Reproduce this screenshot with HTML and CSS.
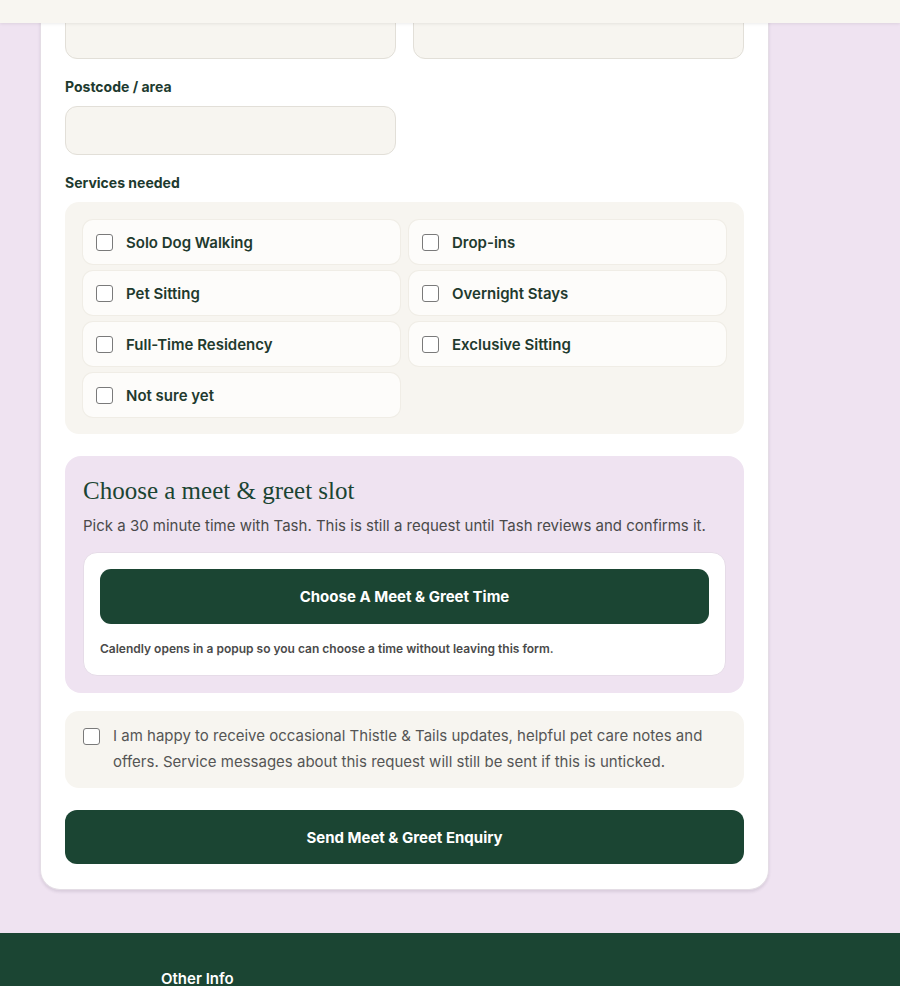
FILE: index.html
```html
<!doctype html>
<html lang="en">
	<head>
		<meta charset="utf-8" />
		<title>Meet &amp; Greet Enquiry - Thistle &amp; Tails</title>
		<link rel="stylesheet" href="styles.css">
	</head>
	<body>
		<header class="topbar"></header>

		<div class="page">
			<main class="card">
				<form class="enquiry" method="post">
					<div class="row">
						<input class="text-input" type="text" name="phone" />
						<input class="text-input" type="text" name="pet" />
					</div>

					<div class="field">
						<label class="label" for="postcode">Postcode / area</label>
						<div class="row">
							<input class="text-input" type="text" id="postcode" name="postcode" />
						</div>
					</div>

					<div class="field">
						<span class="label">Services needed</span>
						<div class="services">
							<label class="service"><input type="checkbox" name="services" value="solo" /><span>Solo Dog Walking</span></label>
							<label class="service"><input type="checkbox" name="services" value="dropins" /><span>Drop-ins</span></label>
							<label class="service"><input type="checkbox" name="services" value="sitting" /><span>Pet Sitting</span></label>
							<label class="service"><input type="checkbox" name="services" value="overnight" /><span>Overnight Stays</span></label>
							<label class="service"><input type="checkbox" name="services" value="residency" /><span>Full-Time Residency</span></label>
							<label class="service"><input type="checkbox" name="services" value="exclusive" /><span>Exclusive Sitting</span></label>
							<label class="service"><input type="checkbox" name="services" value="unsure" /><span>Not sure yet</span></label>
						</div>
					</div>

					<section class="slot">
						<h2>Choose a meet &amp; greet slot</h2>
						<p class="slot-intro">Pick a 30 minute time with Tash. This is still a request until Tash reviews and confirms it.</p>
						<div class="slot-box">
							<button type="button" class="btn">Choose A Meet &amp; Greet Time</button>
							<p class="slot-note">Calendly opens in a popup so you can choose a time without leaving this form.</p>
						</div>
					</section>

					<label class="consent">
						<input type="checkbox" name="marketing" />
						<span>I am happy to receive occasional Thistle &amp; Tails updates, helpful pet care notes and offers. Service messages about this request will still be sent if this is unticked.</span>
					</label>

					<button type="submit" class="btn btn-send">Send Meet &amp; Greet Enquiry</button>
				</form>
			</main>
		</div>

		<footer class="footer">
			<div class="footer-col">
				<h3>Other Info</h3>
			</div>
		</footer>
	</body>
</html>
```

FILE: styles.css
```css
body {
	margin: 0;
	background-color: #efe3f1;
	font-family: Inter, "Noto Sans", sans-serif;
	color: #1d3a2f;
}

.topbar {
	position: fixed;
	top: 0;
	left: 0;
	right: 0;
	height: 23px;
	background-color: #f8f6f1;
	box-shadow: 0 1px 3px rgba(0, 0, 0, 0.08);
	z-index: 10;
}

.page {
	display: grid;
	grid-template-columns: 729px 1fr;
	padding: 0 0 43px 40px;
}

.card {
	background-color: #fff;
	border: 1px solid #e4dde5;
	border-top: none;
	border-radius: 0 0 20px 20px;
	box-shadow: 0 2px 3px rgba(60, 40, 70, 0.12);
	padding: 10px 24px 25px;
}

.enquiry {
	display: flex;
	flex-direction: column;
}

.row {
	display: grid;
	grid-template-columns: 1fr 1fr;
	gap: 17px;
}

.text-input {
	box-sizing: border-box;
	height: 49px;
	width: 100%;
	background-color: #f7f5f0;
	border: 1px solid #e2dfd8;
	border-radius: 12px;
	font: inherit;
}

.field {
	margin-top: 18px;
}

.label {
	display: block;
	margin: 0 0 9px;
	font-size: 14px;
	line-height: 20px;
	font-weight: 700;
	color: #1d3a2f;
}

.services {
	display: grid;
	grid-template-columns: 1fr 1fr;
	gap: 7px 9px;
	padding: 18px 18px 17px;
	background-color: #f7f5f0;
	border-radius: 14px;
}

.service {
	display: flex;
	align-items: center;
	gap: 13px;
	height: 44px;
	padding: 0 13px;
	background-color: #fdfcfa;
	border-radius: 10px;
	box-shadow: 0 0 0 1px #f0ede6;
	font-size: 15px;
	font-weight: 600;
	color: #1f3a2e;
}

input[type="checkbox"] {
	appearance: none;
	box-sizing: border-box;
	flex: none;
	width: 17px;
	height: 17px;
	margin: 0;
	background-color: #fff;
	border: 1.5px solid #7a7a7a;
	border-radius: 3px;
}

.slot {
	margin-top: 22px;
	padding: 20px 18px 17px;
	background-color: #efe3f1;
	border-radius: 16px;
}

.slot h2 {
	margin: 0;
	font-family: "Liberation Serif", "DejaVu Serif", serif;
	font-size: 25px;
	line-height: 30px;
	font-weight: 400;
	color: #1b4533;
}

.slot-intro {
	margin: 9px 0 15px;
	font-size: 15px;
	line-height: 22px;
	color: #4a4a4a;
}

.slot-box {
	padding: 16px 16px 17px;
	background-color: #fff;
	border: 1px solid #e6dce8;
	border-radius: 14px;
}

.btn {
	display: block;
	width: 100%;
	height: 55px;
	border: none;
	border-radius: 11px;
	background-color: #1b4533;
	color: #fff;
	font-family: inherit;
	font-size: 15px;
	font-weight: 700;
}

.slot-note {
	margin: 16px 0 0;
	font-size: 12px;
	line-height: 18px;
	font-weight: 600;
	color: #4a4a4a;
}

.consent {
	display: flex;
	align-items: flex-start;
	gap: 13px;
	margin-top: 18px;
	padding: 12px 18px 13px;
	background-color: #f7f5f0;
	border-radius: 14px;
	font-size: 15px;
	line-height: 26px;
	color: #555;
}

.consent input {
	margin-top: 5px;
}

.btn-send {
	margin-top: 22px;
	height: 54px;
	border-radius: 12px;
}

.footer {
	background-color: #1b4533;
	padding: 36px 0 40px 161px;
	color: #fff;
}

.footer h3 {
	margin: 0;
	font-size: 15px;
	line-height: 20px;
	font-weight: 600;
}
```
